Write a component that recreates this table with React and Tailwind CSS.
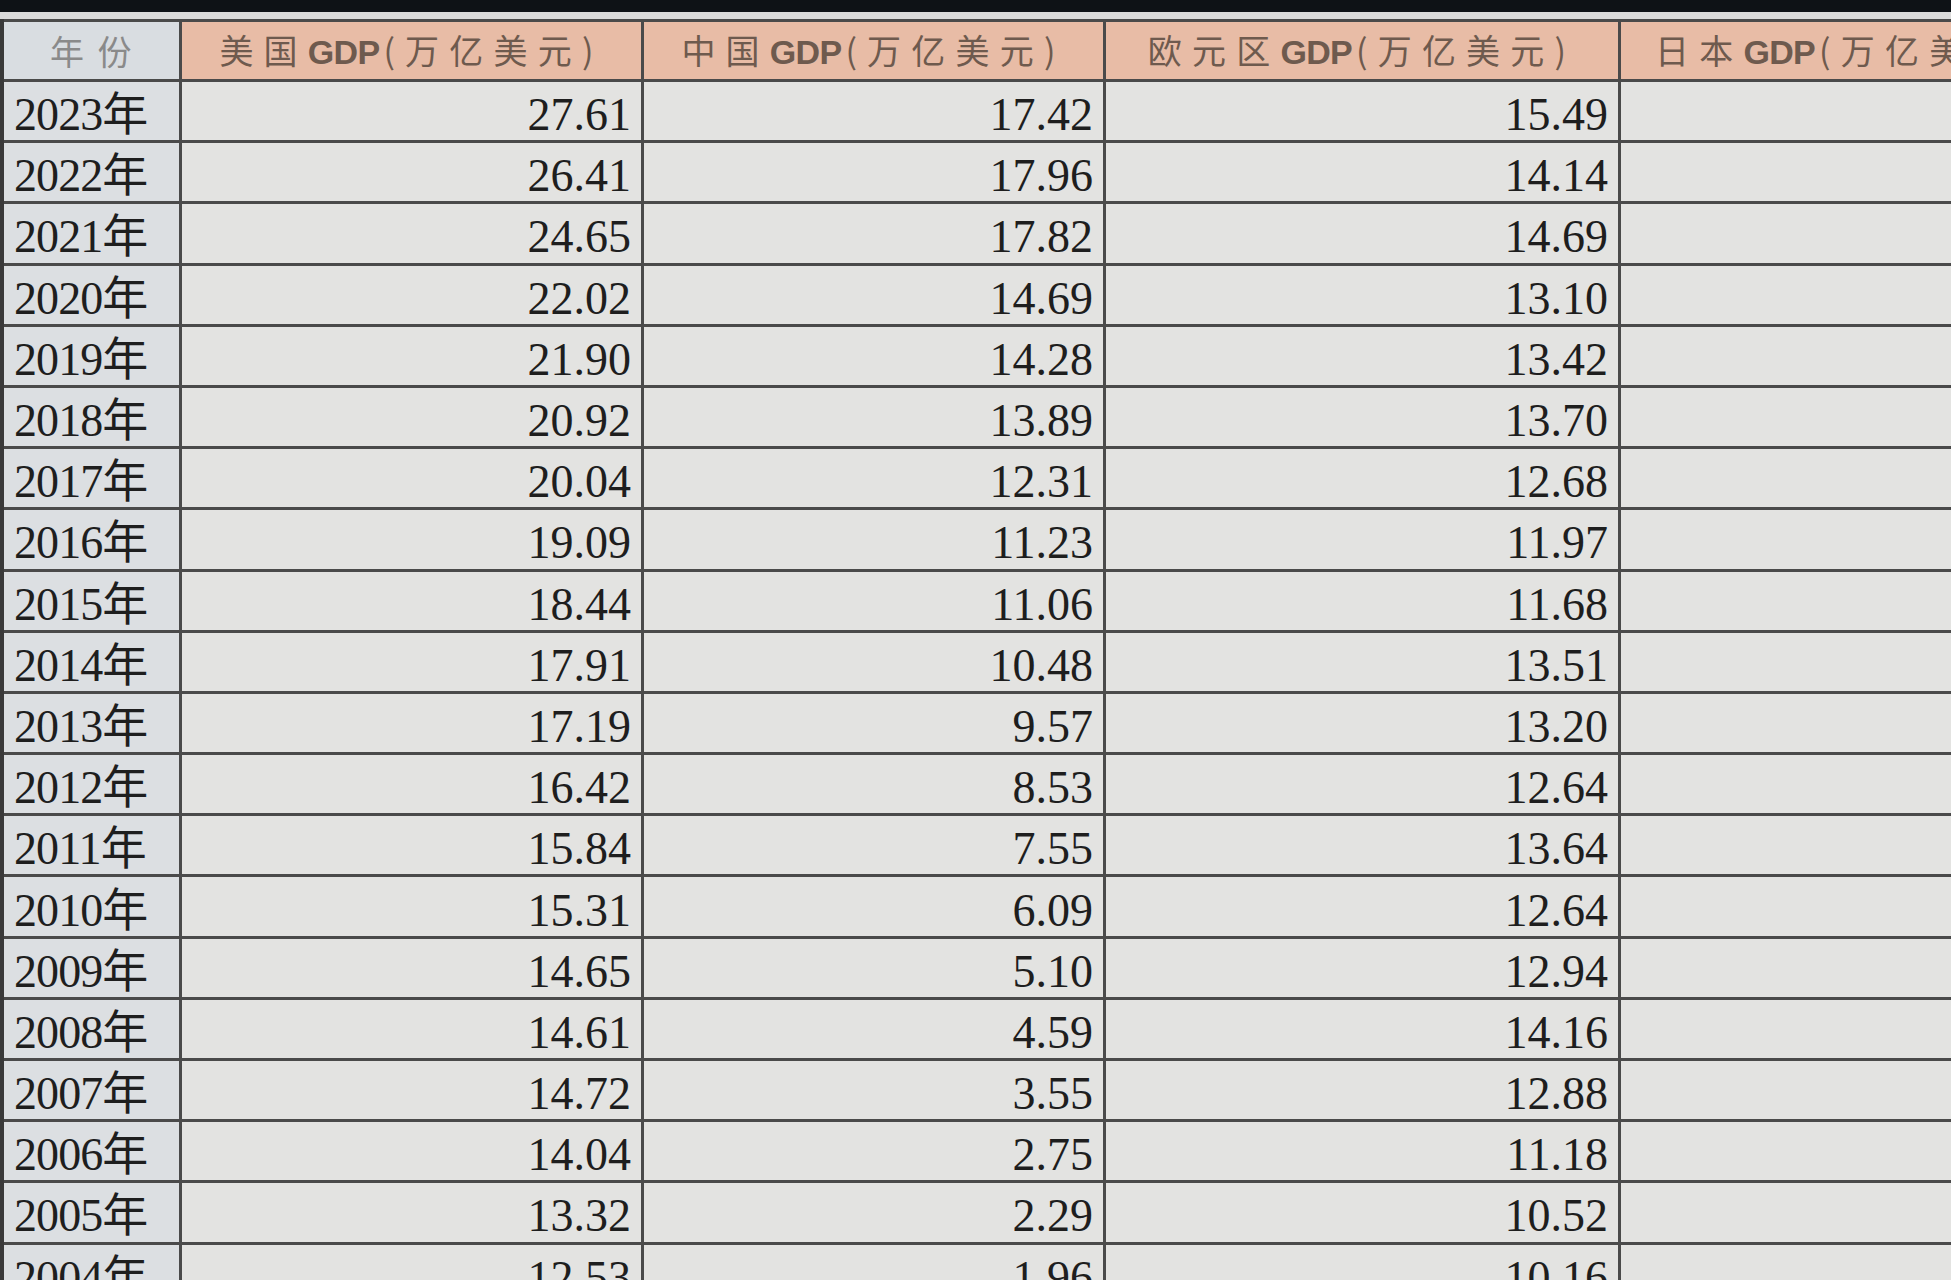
import React from 'react';

// GDP comparison sheet, rows newest first
const rows = [
    ['2023', '27.61', '17.42', '15.49'],
    ['2022', '26.41', '17.96', '14.14'],
    ['2021', '24.65', '17.82', '14.69'],
    ['2020', '22.02', '14.69', '13.10'],
    ['2019', '21.90', '14.28', '13.42'],
    ['2018', '20.92', '13.89', '13.70'],
    ['2017', '20.04', '12.31', '12.68'],
    ['2016', '19.09', '11.23', '11.97'],
    ['2015', '18.44', '11.06', '11.68'],
    ['2014', '17.91', '10.48', '13.51'],
    ['2013', '17.19', '9.57', '13.20'],
    ['2012', '16.42', '8.53', '12.64'],
    ['2011', '15.84', '7.55', '13.64'],
    ['2010', '15.31', '6.09', '12.64'],
    ['2009', '14.65', '5.10', '12.94'],
    ['2008', '14.61', '4.59', '14.16'],
    ['2007', '14.72', '3.55', '12.88'],
    ['2006', '14.04', '2.75', '11.18'],
    ['2005', '13.32', '2.29', '10.52'],
    ['2004', '12.53', '1.96', '10.16'],
];

const headers = ['美国', '中国', '欧元区'];

const cjk = { fontFamily: '"Noto Sans CJK SC", sans-serif' };
const serif = { fontFamily: '"Liberation Serif", "Noto Sans CJK SC", serif' };

const GRID = 'grid grid-cols-[178px_462px_462px_515px_1fr]';

const HeadLabel = ({ region }) => (
    <span className="whitespace-nowrap">
        <span className="tracking-[0.3em]">{region}</span>
        <span className="font-bold tracking-[-0.02em]" style={{ fontFamily: '"Liberation Sans Narrow", "Liberation Sans", sans-serif' }}>GDP</span>
        <span className="tracking-[0.3em] pl-[4px]">(万亿美元)</span>
    </span>
);

const Header = () => (
    <div className={`${GRID} h-[63px] border-t-[3px] border-b-[3px] border-[#4a4a4a]`}>
        <div className="bg-[#d9dde1] border-r-[3px] border-[#4a4a4a] flex items-center justify-center text-[34px] tracking-[0.4em] text-[#8a8a8a] pl-[12px]" style={cjk}>
            年份
        </div>
        {headers.map(h => (
            <div key={h} className="bg-[#e8bca6] border-r-[3px] border-[#4a4a4a] flex items-center justify-center text-[34px] text-[#6e5a4e] overflow-hidden" style={cjk}>
                <HeadLabel region={h} />
            </div>
        ))}
        <div className="bg-[#e8bca6] flex items-center pl-[34px] text-[34px] text-[#6e5a4e] overflow-hidden" style={cjk}>
            <HeadLabel region="日本" />
        </div>
    </div>
);

const Row = ({ r }) => (
    <div className={`${GRID} h-[61.2px] border-b-[3px] border-[#4a4a4a] shrink-0`}>
        <div className="bg-[#dcdfe2] border-r-[3px] border-[#4a4a4a] flex items-center pl-[10px] pt-[8px] text-[46px] leading-none text-[#1e1e1e] tracking-[-0.02em]" style={serif}>
            {r[0]}年
        </div>
        {r.slice(1).map((v, i) => (
            <div key={i} className="bg-[#e3e3e1] border-r-[3px] border-[#4a4a4a] flex items-center justify-end pr-[10px] pt-[8px] text-[46px] leading-none text-[#1e1e1e]" style={serif}>
                {v}
            </div>
        ))}
        <div className="bg-[#e3e3e1]" />
    </div>
);

const App = () => (
    <div className="w-[1951px] h-[1280px] overflow-hidden bg-[#e0e0e0] flex flex-col">
        <div className="h-[12px] bg-[#0e1216] shrink-0" />
        <div className="h-[7px] bg-[#dadada] shrink-0" />
        <div className="border-l-4 border-[#3a3a3a] flex flex-col">
            <Header />
            {rows.map(r => <Row key={r[0]} r={r} />)}
        </div>
    </div>
);

export default App;
